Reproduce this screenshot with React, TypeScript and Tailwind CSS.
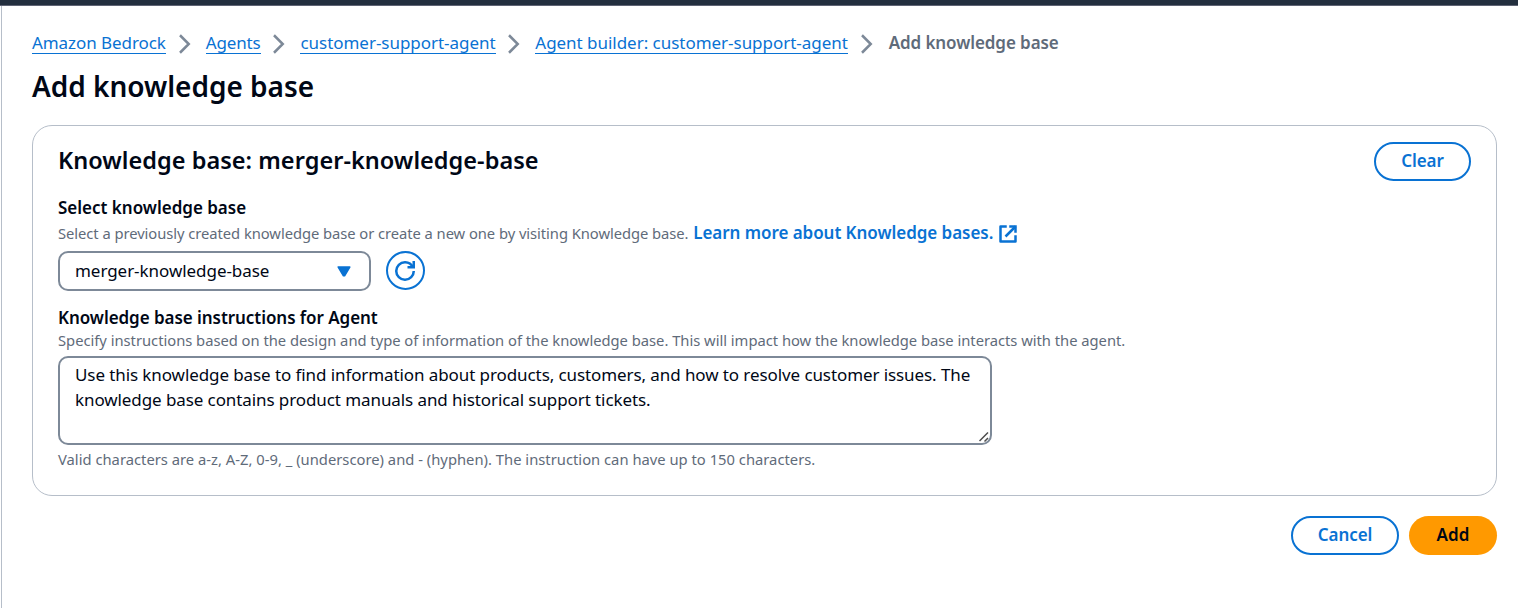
import { Fragment } from "react";

const crumbs = [
  { label: "Amazon Bedrock", className: "tracking-[-0.07px]" },
  { label: "Agents", className: "tracking-[-0.11px]" },
  { label: "customer-support-agent", className: "tracking-[-0.04px]" },
  { label: "Agent builder: customer-support-agent", className: "tracking-[-0.03px]" },
];

function ChevronRight() {
  return (
    <svg className="mt-[4px] mr-[11px] ml-[8.8px] size-5 shrink-0" viewBox="0 0 16 16" fill="none" stroke="#7d8998" strokeWidth="2">
      <path d="m4 1 7 7-7 7" />
    </svg>
  );
}

function ExternalIcon() {
  return (
    <svg className="ml-[5px] inline-block size-5 align-[-5px]" viewBox="0 0 16 16" fill="none" stroke="currentColor" strokeWidth="2">
      <path d="M10 2h4v4" strokeLinecap="square" />
      <path d="m6 10 8-8" />
      <path d="M14 9.048V14H2V2h5" strokeLinejoin="round" />
    </svg>
  );
}

function RefreshIcon() {
  return (
    <svg className="mr-px size-5 shrink-0" viewBox="0 0 16 16" fill="none" stroke="currentColor" strokeWidth="2">
      <path d="M10 5h5V0" />
      <path d="M15 8a6.957 6.957 0 0 1-7 7 6.957 6.957 0 0 1-7-7 6.957 6.957 0 0 1 7-7 6.87 6.87 0 0 1 6.3 4" />
    </svg>
  );
}

export default function App() {
  return (
    <div className="flex h-screen flex-col overflow-hidden bg-white font-['Noto_Sans','Open_Sans',sans-serif] text-[17px] leading-[25px] text-[#000716]">
      <div className="h-1.5 shrink-0 border-b border-[#5f6474] bg-[#232f3e]" />
      <main className="ml-px flex-1 border-l border-[#b6bec9] pt-6 pr-[21px] pl-[30px]">
        <nav className="flex h-[25px] items-start whitespace-nowrap">
          {crumbs.map((c) => (
            <Fragment key={c.label}>
              <a href="#" className={`h-6 border-b border-[#0972d3] text-[#0972d3] ${c.className}`}>
                {c.label}
              </a>
              <ChevronRight />
            </Fragment>
          ))}
          <span className="ml-px font-semibold tracking-[-0.085px] text-[#5f6b7a]">Add knowledge base</span>
        </nav>

        <h1 className="mt-[13px] text-[28px] leading-9 font-semibold tracking-[-0.03px]">Add knowledge base</h1>

        <section className="mt-[21px] h-[371px] rounded-[20px] border border-[#b6bec9] px-[25px] pt-4">
          <div className="flex h-[39px] justify-between">
            <h2 className="text-[23.5px] leading-9 font-semibold tracking-[0.03px]">Knowledge base: merger-knowledge-base</h2>
            <button className="h-[39px] w-[97px] rounded-full border-2 border-[#0972d3] pb-0.5 font-semibold tracking-[-0.085px] text-[#0972d3]">
              Clear
            </button>
          </div>

          <div className="mt-3.5 font-semibold tracking-[-0.01px]">Select knowledge base</div>
          <div className="h-[25px] whitespace-nowrap">
            <span className="text-[14.75px] tracking-[-0.053px] text-[#5f6b7a]">
              Select a previously created knowledge base or create a new one by visiting Knowledge base.
            </span>
            <a href="#" className="ml-[4.7px] font-semibold tracking-[-0.05px] text-[#0972d3]">
              Learn more about Knowledge bases.
              <ExternalIcon />
            </a>
          </div>
          <div className="mt-1.5 flex gap-[15px]">
            <button className="flex h-10 w-[313px] items-center justify-between rounded-[10px] border-2 border-[#7d8998] pr-[18px] pb-px pl-[15px] tracking-[-0.05px]">
              <span>merger-knowledge-base</span>
              <svg className="mt-px h-[11px] w-3.5" viewBox="0 0 14 11" fill="#0972d3" stroke="#0972d3" strokeWidth="1.5" strokeLinejoin="round">
                <path d="M1.2 1h11.6L7.6 9.8H6.4z" />
              </svg>
            </button>
            <button aria-label="Refresh" className="flex size-[39px] items-center justify-center rounded-full border-2 border-[#0972d3] text-[#0972d3]">
              <RefreshIcon />
            </button>
          </div>

          <div className="mt-3.5 font-semibold tracking-[-0.055px]">Knowledge base instructions for Agent</div>
          <div className="text-[14.75px] leading-5 tracking-[-0.018px] whitespace-nowrap text-[#5f6b7a]">
            Specify instructions based on the design and type of information of the knowledge base. This will impact how the
            knowledge base interacts with the agent.
          </div>
          <div className="relative mt-1.5 h-[89px] w-[934px]">
            <textarea
              className="block h-full w-full resize-none rounded-[10px] border-2 border-[#7d8998] px-[15px] py-1 tracking-[-0.09px]"
              defaultValue="Use this knowledge base to find information about products, customers, and how to resolve customer issues. The knowledge base contains product manuals and historical support tickets."
            />
            <svg className="pointer-events-none absolute right-[3px] bottom-[3px] size-2.5" viewBox="0 0 10 10" fill="none" stroke="#4d4d4d" strokeWidth="1.5">
              <path d="M.5 9l8.5-8.5M5.5 9.5l3.5-3.5" />
            </svg>
          </div>
          <div className="mt-1 text-[14.75px] leading-5 tracking-[0.01px] whitespace-nowrap text-[#5f6b7a]">
            Valid characters are a-z, A-Z, 0-9, _ (underscore) and - (hyphen). The instruction can have up to 150 characters.
          </div>
        </section>

        <div className="mt-5 flex justify-end gap-2.5">
          <button className="h-[39px] w-[108px] rounded-full border-2 border-[#0972d3] pb-0.5 font-semibold tracking-[-0.07px] text-[#0972d3]">
            Cancel
          </button>
          <button className="h-[39px] w-[88px] rounded-full bg-[#ff9900] pb-0.5 font-semibold tracking-[0.1px]">Add</button>
        </div>
      </main>
    </div>
  );
}
